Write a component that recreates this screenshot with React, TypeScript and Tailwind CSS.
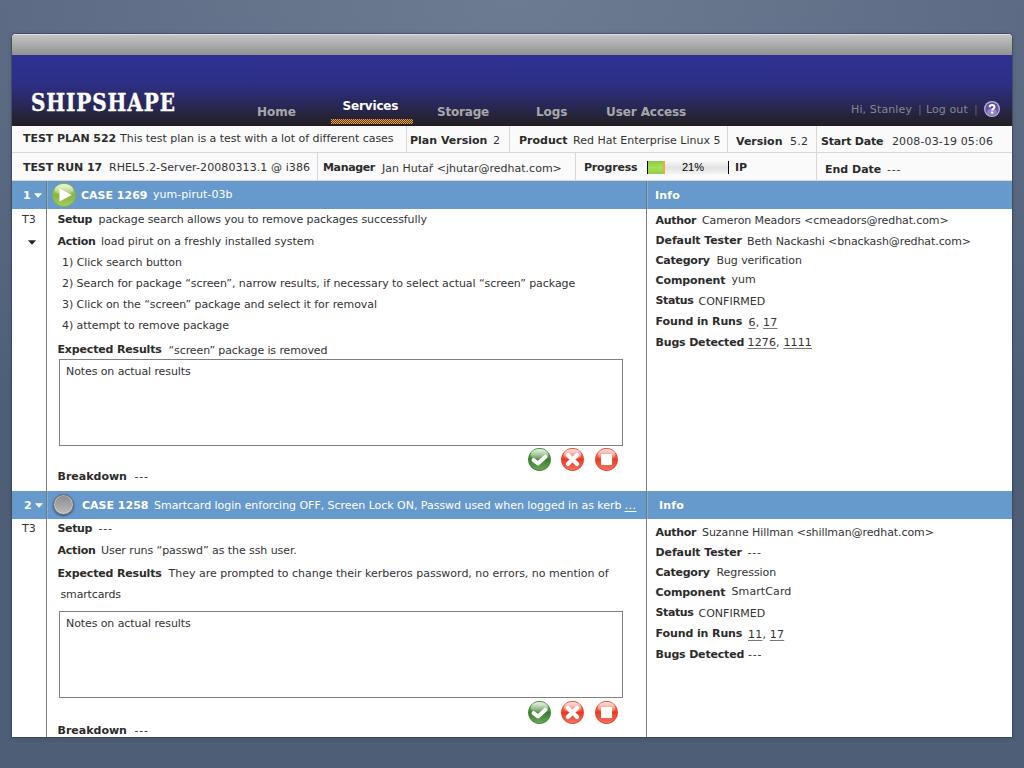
import React, { useId } from 'react';
import clsx from 'clsx';

type PairProps = {
  label: string;
  children?: React.ReactNode;
  className?: string;
  labelClass?: string;
  valueClass?: string;
};

function Pair({ label, children, className, labelClass, valueClass }: PairProps) {
  return (
    <div className={clsx('flex items-start whitespace-nowrap', className)}>
      <span className={clsx('shrink-0 font-bold text-[#2b2b2b]', labelClass)}>{label}</span>
      {children !== undefined && <span className={clsx('shrink-0', valueClass)}>{children}</span>}
    </div>
  );
}

function Caret({ className }: { className?: string }) {
  return (
    <svg viewBox="0 0 8 5" className={clsx('h-[5px] w-2 shrink-0', className)} fill="currentColor">
      <path d="M.5 .3h7q.4.1.2.5L4.5 4.3q-.5.4-1 0L.3.8Q.1.4.5.3z" />
    </svg>
  );
}

type OrbProps = { top: string; mid: string; low: string; size: string; children?: React.ReactNode };

function Orb({ top, mid, low, size, children }: OrbProps) {
  const id = useId();
  return (
    <svg viewBox="0 0 24 24" className={clsx('block shrink-0', size)}>
      <defs>
        <linearGradient id={`${id}a`} x1="0" y1="0" x2="0" y2="1">
          <stop offset="0" stopColor={top} />
          <stop offset=".5" stopColor={mid} />
          <stop offset="1" stopColor={low} />
        </linearGradient>
        <linearGradient id={`${id}b`} x1="0" y1="0" x2="0" y2="1">
          <stop offset="0" stopColor="#fff" stopOpacity=".7" />
          <stop offset="1" stopColor="#fff" stopOpacity=".12" />
        </linearGradient>
      </defs>
      <circle cx="12" cy="12" r="11.9" fill={mid} />
      <circle cx="12" cy="12" r="11.1" fill={`url(#${id}a)`} />
      <ellipse cx="12" cy="6.7" rx="9.2" ry="5.7" fill={`url(#${id}b)`} />
      {children}
    </svg>
  );
}

function Actions({ className }: { className?: string }) {
  return (
    <div className={clsx('flex', className)}>
      <Orb top="#a9cf9d" mid="#38802a" low="#6ba45c" size="size-[23px]">
        <path d="M5.8 12.6l4.6 3.5 7.8-7" fill="none" stroke="#fff" strokeWidth="4.2" strokeLinecap="round" strokeLinejoin="round" />
      </Orb>
      <Orb top="#f5a79d" mid="#e93a20" low="#ef7463" size="ml-2.5 size-[23px]">
        <path d="M7.2 7.2l9.6 9.6M16.8 7.2l-9.6 9.6" fill="none" stroke="#fff" strokeWidth="4.4" strokeLinecap="round" />
      </Orb>
      <Orb top="#f5a79d" mid="#e93a20" low="#ef7463" size="ml-[11px] size-[23px]">
        <rect x="6.3" y="6.3" width="11.5" height="11.5" fill="#fff" />
      </Orb>
    </div>
  );
}

function PlayIcon() {
  return (
    <Orb top="#c9e29a" mid="#86b440" low="#a5cc62" size="size-6">
      <path d="M7.5 5.4v13.2L19.8 12z" fill="#fff" />
    </Orb>
  );
}

function IdleIcon() {
  return (
    <div className="size-[21px] shrink-0 rounded-full border border-[#66696c] bg-linear-to-b from-[#8a8a8a] to-[#bcbcbc] shadow-[0_1px_2px_rgba(30,40,60,0.7),inset_0_0_0_1px_rgba(255,255,255,0.35)]" />
  );
}

function ActiveMark() {
  return (
    <svg className="block h-[5px] w-[82px]" shapeRendering="crispEdges">
      <defs>
        <pattern id="dither" width="2" height="2" patternUnits="userSpaceOnUse">
          <rect width="2" height="2" fill="#4a3a2c" />
          <rect width="1" height="1" fill="#f9a03c" />
          <rect x="1" y="1" width="1" height="1" fill="#f9a03c" />
        </pattern>
      </defs>
      <rect width="82" height="5" fill="url(#dither)" />
    </svg>
  );
}

function CaseBar({ num, numClass, children, info, infoClass }: { num: string; numClass: string; children: React.ReactNode; info: string; infoClass: string }) {
  return (
    <div className="flex h-7 shrink-0 bg-[#6699cc] text-white">
      <div className={clsx('flex w-[35px] items-start border-r border-[#5f7f90] pt-[7px] font-bold', numClass)}>
        <span className="w-[11px]">{num}</span>
        <Caret className="mt-[5px]" />
      </div>
      <div className="flex w-[600px] items-start border-r border-l border-r-[#5f7f90] border-l-[#8aaec8] whitespace-nowrap">{children}</div>
      <div className={clsx('flex-1 border-l border-[#8aaec8] pt-[7px] font-bold', infoClass)}>{info}</div>
    </div>
  );
}

function Notes({ className }: { className?: string }) {
  return (
    <div className={clsx('ml-3 h-[87px] w-[564px] shrink-0 border border-[#808080] pt-1 pl-[6px] tracking-[-0.089px]', className)}>
      Notes on actual results
    </div>
  );
}

const link = 'underline decoration-[#777] underline-offset-2';

export default function App() {
  return (
    <div className="flex h-[768px] w-[1024px] flex-col overflow-hidden bg-[#4e5e77] bg-[radial-gradient(ellipse_900px_500px_at_50%_0%,#6d7b92_0%,#5d6b84_55%,#4e5e77_100%)] px-3 pt-[34px] font-['DejaVu_Sans',sans-serif] text-[11px] leading-4 text-[#333]">
      <div className="flex h-[703px] flex-col overflow-hidden rounded-t-[4px] bg-white shadow-[0_0_0_1px_rgba(45,55,75,0.5),0_1px_5px_rgba(30,40,60,0.25)]">
        <div className="h-[21px] shrink-0 border-t border-[#dedede] bg-linear-to-b from-[#c4c4c4] to-[#919191]" />

        <header className="flex h-[71px] shrink-0 bg-[linear-gradient(#2e3192_0%,#2d2f85_40%,#292858_70%,#231f20_100%)]">
          <div className="w-[221px] pt-8 pl-[19px]">
            <div className="origin-left scale-x-[0.8] font-['DejaVu_Serif',serif] text-[25px] leading-8 font-bold tracking-[1.1px] text-white [-webkit-text-stroke:0.4px_white]">
              SHIPSHAPE
            </div>
          </div>
          <nav className="flex flex-1 items-start text-xs font-bold text-[#a8a8ab]">
            <span className="w-[98px] pt-[49px] pl-6">Home</span>
            <span className="flex h-[69px] w-[82px] flex-col justify-between pt-[43px] tracking-[-0.15px] text-white">
              <span className="pl-[11.5px]">Services</span>
              <ActiveMark />
            </span>
            <span className="w-[100px] pt-[49px] pl-6 tracking-[-0.2px]">Storage</span>
            <span className="w-[70px] pt-[49px] pl-[23px] tracking-[-0.1px]">Logs</span>
            <span className="pt-[49px] pl-[23px] tracking-[-0.09px]">User Access</span>
          </nav>
          <div className="flex w-[161px] pt-[46px] text-[#87878f]">
            <span className="w-[67px] pt-px tracking-[0.13px]">Hi, Stanley</span>
            <span className="w-2 pt-px text-[#666]">|</span>
            <span className="w-12 pt-px tracking-[0.1px]">Log out</span>
            <span className="w-[10px] pt-px text-[#666]">|</span>
            <svg viewBox="0 0 16 16" className="size-4">
              <circle cx="8" cy="8" r="8" fill="#b9b3d6" />
              <circle cx="8" cy="8" r="6.7" fill="#6650a6" />
              <ellipse cx="8" cy="11" rx="5" ry="3.4" fill="#9183c6" />
              <path d="M5.6 6.2q.1-2.1 2.4-2.1t2.4 1.9q0 1.2-1.2 1.9-.9.5-.9 1.5" fill="none" stroke="#fff" strokeWidth="2" />
              <rect x="7.1" y="10.6" width="2.2" height="2" fill="#fff" />
            </svg>
          </div>
        </header>

        <div className="flex h-[27px] shrink-0 border-b border-[#d8d8d8] bg-[#fafafa]">
          <Pair label="TEST PLAN 522" className="w-[395px] border-r border-[#d8d8d8] pt-[5px] pl-[11px]" labelClass="w-[97px] tracking-[-0.058px]" valueClass="tracking-[-0.03px]">
            This test plan is a test with a lot of different cases
          </Pair>
          <Pair label="Plan Version" className="w-[103px] border-r border-[#d8d8d8] pt-[7px] pl-[3px]" labelClass="w-[83px]">2</Pair>
          <Pair label="Product" className="w-[218px] border-r border-[#d8d8d8] pt-[7px] pl-[9px]" labelClass="w-[54px]">Red Hat Enterprise Linux 5</Pair>
          <Pair label="Version" className="w-[89px] border-r border-[#d8d8d8] pt-2 pl-2" labelClass="w-[54px]" valueClass="tracking-[0.2px]">5.2</Pair>
          <Pair label="Start Date" className="pt-2 pl-1" labelClass="w-[71px] tracking-[-0.214px]" valueClass="tracking-[0.12px]">2008-03-19 05:06</Pair>
        </div>
        <div className="flex h-7 shrink-0 border-b border-[#d8d8d8] bg-[#fafafa]">
          <Pair label="TEST RUN 17" className="w-[306px] border-r border-[#d8d8d8] pt-[7px] pl-[11px]" labelClass="w-[86px] tracking-[-0.086px]" valueClass="tracking-[0.086px]">
            RHEL5.2-Server-20080313.1 @ i386
          </Pair>
          <Pair label="Manager" className="w-[258px] border-r border-[#d8d8d8] pt-[7px] pl-[5px]" labelClass="w-[59px] tracking-[-0.35px]" valueClass="pt-px">
            Jan Hutař &lt;jhutar@redhat.com&gt;
          </Pair>
          <div className="flex w-[241px] border-r border-[#d8d8d8] pl-2">
            <span className="w-[63px] pt-[7px] font-bold tracking-[-0.19px] text-[#2b2b2b]">Progress</span>
            <div className="mt-2 flex h-[13px] w-[82px] border-x border-black bg-linear-to-b from-[#f8f8f8] via-[#e2e2e2] to-[#f2f2f2]">
              <div className="w-[17px] border-r-2 border-[#f0a840] bg-linear-to-b from-[#8fc84c] via-[#a3e24c] to-[#93cc4e]" />
              <span className="pl-[17px] font-['Liberation_Sans',sans-serif] text-[11px] leading-[13px] text-black">21%</span>
            </div>
            <span className="pt-[7px] pl-[6px] font-bold text-[#2b2b2b]">IP</span>
          </div>
          <Pair label="End Date" className="pt-[9px] pl-2" labelClass="w-[62px]" valueClass="tracking-[0.78px]">---</Pair>
        </div>

        <CaseBar num="1" numClass="pl-[11px]" info="Info" infoClass="pl-[7px] tracking-[0.2px]">
          <span className="mt-[2px] ml-1"><PlayIcon /></span>
          <span className="mt-[7px] ml-[5px] w-[72px] font-bold">CASE 1269</span>
          <span className="mt-1.5 tracking-[0.04px]">yum-pirut-03b</span>
        </CaseBar>
        <div className="flex h-[282px] shrink-0">
          <div className="flex w-[35px] flex-col border-r border-[#808080] pt-[3px] pl-[10px]">
            <span>T3</span>
            <Caret className="mt-3 ml-[6px] text-[#262626]" />
          </div>
          <div className="flex w-[600px] flex-col border-r border-[#808080] pt-[3px]">
            <Pair label="Setup" className="pl-[10.5px]" labelClass="w-[41px] tracking-[-0.35px]" valueClass="tracking-[-0.09px]">
              package search allows you to remove packages successfully
            </Pair>
            <Pair label="Action" className="mt-1.5 pl-[10.5px]" labelClass="w-[43.5px] tracking-[-0.22px]" valueClass="tracking-[-0.03px]">
              load pirut on a freshly installed system
            </Pair>
            <ol className="-mt-0.5 pt-[6px] pl-[15px] leading-[21px] whitespace-nowrap [&>li]:-mt-[2.5px] [&>li]:mb-[2.5px]">
              <li className="tracking-[-0.04px]">1) Click search button</li>
              <li className="tracking-[-0.067px]">2) Search for package “screen”, narrow results, if necessary to select actual “screen” package</li>
              <li className="tracking-[-0.064px]">3) Click on the “screen” package and select it for removal</li>
              <li className="tracking-[-0.06px]">4) attempt to remove package</li>
            </ol>
            <Pair label="Expected Results" className="mt-1 pl-[10.5px]" labelClass="w-[111px] tracking-[-0.16px]" valueClass="pt-px tracking-[-0.11px]">
              “screen” package is removed
            </Pair>
            <Notes />
            <div className="flex">
              <Pair label="Breakdown" className="w-[481px] pt-[23px] pl-[10.5px]" labelClass="w-[77px]" valueClass="tracking-[0.78px]">---</Pair>
              <Actions className="pt-[2px]" />
            </div>
          </div>
          <div className="flex-1 pt-1 pl-[8.5px]">
            <Pair label="Author" className="h-5" labelClass="w-[46.5px] tracking-[-0.3px]" valueClass="tracking-[-0.11px]">Cameron Meadors &lt;cmeadors@redhat.com&gt;</Pair>
            <Pair label="Default Tester" className="h-5" labelClass="w-[91.5px] tracking-[-0.097px]" valueClass="pt-px tracking-[-0.09px]">Beth Nackashi &lt;bnackash@redhat.com&gt;</Pair>
            <Pair label="Category" className="h-5" labelClass="w-[61px] tracking-[-0.25px]" valueClass="tracking-[-0.078px]">Bug verification</Pair>
            <Pair label="Component" className="h-5" labelClass="w-[76px] tracking-[-0.12px]" valueClass="-mt-px">yum</Pair>
            <Pair label="Status" className="h-[21px]" labelClass="w-[43px] tracking-[-0.4px]" valueClass="pt-px">CONFIRMED</Pair>
            <Pair label="Found in Runs" className="h-[21px]" labelClass="w-[93px] tracking-[-0.1px]" valueClass="pt-px tracking-[0.2px]">
              <a className={link}>6</a>, <a className={link}>17</a>
            </Pair>
            <Pair label="Bugs Detected" labelClass="w-[92px] tracking-[-0.168px]" valueClass="tracking-[0.15px]">
              <a className={link}>1276</a>, <a className={link}>1111</a>
            </Pair>
          </div>
        </div>

        <CaseBar num="2" numClass="pl-3" info="Info" infoClass="pl-[11px] tracking-[0.2px]">
          <span className="mt-[3px] ml-[5px]"><IdleIcon /></span>
          <span className="mt-[7px] ml-2 w-[72px] font-bold">CASE 1258</span>
          <span className="mt-[7px] tracking-[-0.033px]">Smartcard login enforcing OFF, Screen Lock ON, Passwd used when logged in as kerb</span>
          <a className="mt-[7px] ml-[3px] tracking-[0.5px] underline underline-offset-2">...</a>
        </CaseBar>
        <div className="flex h-[218px] shrink-0 overflow-hidden">
          <div className="w-[35px] border-r border-[#808080] pt-[2px] pl-[10px]">T3</div>
          <div className="flex w-[600px] flex-col border-r border-[#808080] pt-[2px]">
            <Pair label="Setup" className="pl-[10.5px]" labelClass="w-[41px] tracking-[-0.35px]" valueClass="tracking-[0.78px]">---</Pair>
            <Pair label="Action" className="mt-1.5 pl-[10.5px]" labelClass="w-[43.5px] tracking-[-0.22px]" valueClass="tracking-[-0.07px]">User runs “passwd” as the ssh user.</Pair>
            <Pair label="Expected Results" className="mt-[7px] pl-[10.5px]" labelClass="w-[111px] tracking-[-0.16px]" valueClass="tracking-[-0.005px]">
              They are prompted to change their kerberos password, no errors, no mention of
            </Pair>
            <div className="mt-[5px] pl-[13.5px] tracking-[-0.15px]">smartcards</div>
            <Notes className="mt-2" />
            <div className="flex">
              <Pair label="Breakdown" className="w-[481px] pt-[25px] pl-[10.5px]" labelClass="w-[77px]" valueClass="tracking-[0.78px]">---</Pair>
              <Actions className="pt-[3px]" />
            </div>
          </div>
          <div className="flex-1 pt-1.5 pl-[8.5px]">
            <Pair label="Author" className="h-5" labelClass="w-[46.5px] tracking-[-0.3px]" valueClass="tracking-[-0.08px]">Suzanne Hillman &lt;shillman@redhat.com&gt;</Pair>
            <Pair label="Default Tester" className="h-5" labelClass="w-[92px] tracking-[-0.097px]" valueClass="tracking-[0.78px]">---</Pair>
            <Pair label="Category" className="h-5" labelClass="w-[61px] tracking-[-0.25px]" valueClass="tracking-[-0.05px]">Regression</Pair>
            <Pair label="Component" className="h-5" labelClass="w-[76px] tracking-[-0.12px]" valueClass="-mt-px tracking-[0.1px]">SmartCard</Pair>
            <Pair label="Status" className="h-[21px]" labelClass="w-[43px] tracking-[-0.4px]" valueClass="pt-px">CONFIRMED</Pair>
            <Pair label="Found in Runs" className="h-[21px]" labelClass="w-[92.5px] tracking-[-0.1px]" valueClass="pt-px tracking-[0.2px]">
              <a className={link}>11</a>, <a className={link}>17</a>
            </Pair>
            <Pair label="Bugs Detected" labelClass="w-[92.5px] tracking-[-0.168px]" valueClass="tracking-[0.78px]">---</Pair>
          </div>
        </div>
      </div>
    </div>
  );
}
